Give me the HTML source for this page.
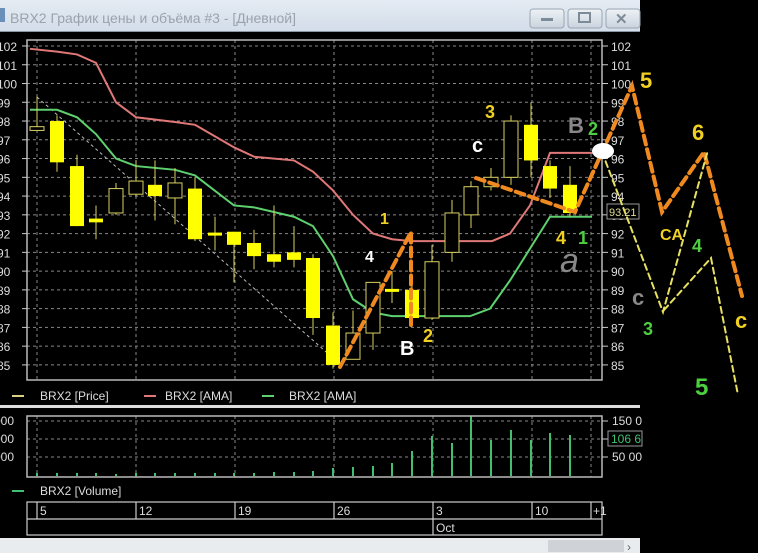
<!DOCTYPE html>
<html><head><meta charset="utf-8"><style>
html,body{margin:0;padding:0;background:#000;width:758px;height:553px;overflow:hidden}
svg{display:block}
text{font-family:"Liberation Sans",sans-serif}
</style></head><body>
<svg id="s" width="758" height="553" viewBox="0 0 758 553" xmlns="http://www.w3.org/2000/svg">
<defs><linearGradient id="tb" x1="0" y1="0" x2="0" y2="1"><stop offset="0" stop-color="#e4ebf3"/><stop offset="1" stop-color="#d3dde8"/></linearGradient>
<linearGradient id="bt" x1="0" y1="0" x2="0" y2="1"><stop offset="0" stop-color="#eef2f6"/><stop offset="1" stop-color="#c9d3de"/></linearGradient></defs>
<rect width="758" height="553" fill="#000"/>
<!-- title bar -->
<rect x="0" y="0" width="640" height="32" fill="url(#tb)"/>
<rect x="0" y="31" width="640" height="1" fill="#8a96a3"/>
<rect x="0" y="8" width="5" height="14" fill="#6a8fb8"/>
<text x="10" y="23" font-size="14" fill="#9aa3ad" font-family="Liberation Sans, DejaVu Sans, sans-serif">BRX2 График цены и объёма #3 - [Дневной]</text>
<rect x="530" y="9" width="34" height="19" rx="3" fill="url(#bt)" stroke="#9aa6b3"/>
<rect x="541" y="18" width="12" height="3" fill="#7d8a97"/>
<rect x="568" y="9" width="34" height="19" rx="3" fill="url(#bt)" stroke="#9aa6b3"/>
<rect x="579" y="13" width="11" height="9" fill="none" stroke="#7d8a97" stroke-width="2"/>
<rect x="606" y="9" width="34" height="19" rx="3" fill="url(#bt)" stroke="#9aa6b3"/>
<text x="615" y="24" font-size="15" font-weight="bold" fill="#7d8a97">✕</text>

<g id="grid"></g>
<rect x="27" y="40" width="575" height="340" fill="none" stroke="#bbb" stroke-width="1.5"/>
<g id="lab" font-size="12" fill="#ddd"></g>
<line x1="37" y1="97" x2="333" y2="358" stroke="#bbb" stroke-width="1" stroke-dasharray="3,3"/>
<polyline id="red" fill="none" stroke="#e07878" stroke-width="2"/>
<polyline id="grn" fill="none" stroke="#5fd06f" stroke-width="2"/>
<g id="cd"></g>
<rect x="607" y="204" width="32" height="15" fill="#000" stroke="#999"/>
<text x="609" y="216" font-size="11" fill="#dd9">93.21</text>

<!-- annotations -->
<g fill="none" stroke-linecap="round">
<polyline points="340,367 411,232 411,325" stroke="#f08a20" stroke-width="4" stroke-dasharray="9,5"/>
<polyline points="476,178 575,212 632,86 662,212 704,152 742,296" stroke="#f08a20" stroke-width="4" stroke-dasharray="9,5"/>
<polyline points="602,152 663,312 708,150" stroke="#e8e060" stroke-width="2" stroke-dasharray="6,4"/>
<polyline points="664,310 711,258 738,395" stroke="#e8e060" stroke-width="2" stroke-dasharray="6,4"/>
</g>
<ellipse cx="603" cy="151" rx="11" ry="8" fill="#fff"/>
<g font-family="Liberation Sans, sans-serif" font-weight="bold">
<text x="640" y="88" font-size="22" fill="#f0d020">5</text>
<text x="692" y="140" font-size="22" fill="#f0d020">6</text>
<text x="660" y="240" font-size="16" fill="#f0d020">CA</text>
<text x="692" y="252" font-size="18" fill="#4cd040">4</text>
<text x="643" y="335" font-size="18" fill="#4cd040">3</text>
<text x="632" y="305" font-size="22" fill="#888">c</text>
<text x="735" y="328" font-size="22" fill="#f0d020">c</text>
<text x="695" y="395" font-size="24" fill="#4cd040">5</text>
<text x="560" y="272" font-size="34" font-style="italic" fill="#888" font-weight="normal">a</text>
<text x="556" y="244" font-size="18" fill="#f0d020">4</text>
<text x="578" y="244" font-size="18" fill="#4cd040">1</text>
<text x="400" y="355" font-size="20" fill="#fff">B</text>
<text x="423" y="342" font-size="18" fill="#f0d020">2</text>
<text x="380" y="224" font-size="16" fill="#f0d020">1</text>
<text x="365" y="262" font-size="16" fill="#fff">4</text>
<text x="485" y="118" font-size="18" fill="#f0d020">3</text>
<text x="472" y="152" font-size="20" fill="#fff">c</text>
<text x="568" y="133" font-size="22" fill="#888">B</text>
<text x="588" y="135" font-size="18" fill="#4cd040">2</text>
</g>

<!-- legend -->
<line x1="12" y1="396" x2="24" y2="396" stroke="#d8d080" stroke-width="2"/>
<text x="40" y="400" font-size="12" fill="#ddd">BRX2 [Price]</text>
<line x1="144" y1="396" x2="156" y2="396" stroke="#e07878" stroke-width="2"/>
<text x="165" y="400" font-size="12" fill="#ddd">BRX2 [AMA]</text>
<line x1="262" y1="396" x2="274" y2="396" stroke="#5fd06f" stroke-width="2"/>
<text x="289" y="400" font-size="12" fill="#ddd">BRX2 [AMA]</text>
<rect x="0" y="405" width="640" height="3" fill="#ddd"/>

<!-- volume -->
<g id="vg"></g>
<rect x="27" y="416" width="575" height="61" fill="none" stroke="#bbb" stroke-width="1.5"/>
<g font-size="12" fill="#ddd">
<text x="-6" y="425">000</text><text x="-6" y="443">000</text><text x="-6" y="461">000</text>
<text x="612" y="425">150 0</text><text x="612" y="461">50 00</text>
</g>
<rect x="608" y="431" width="34" height="15" fill="#000" stroke="#999"/>
<text x="611" y="443" font-size="12" fill="#40c070">106 6</text>
<line x1="12" y1="491" x2="24" y2="491" stroke="#40c070" stroke-width="2"/>
<text x="40" y="495" font-size="12" fill="#ddd">BRX2 [Volume]</text>

<!-- date axis -->
<g stroke="#ccc" stroke-width="1.2" fill="none">
<rect x="27" y="502" width="575" height="33"/>
<line x1="27" y1="519" x2="602" y2="519"/>
<line x1="37" y1="502" x2="37" y2="519"/><line x1="136" y1="502" x2="136" y2="519"/>
<line x1="235" y1="502" x2="235" y2="519"/><line x1="334" y1="502" x2="334" y2="519"/>
<line x1="433" y1="502" x2="433" y2="535"/><line x1="532" y1="502" x2="532" y2="519"/>
<line x1="591" y1="502" x2="591" y2="519"/>
</g>
<g font-size="12" fill="#ddd">
<text x="40" y="515">5</text><text x="139" y="515">12</text><text x="238" y="515">19</text>
<text x="337" y="515">26</text><text x="436" y="515">3</text><text x="535" y="515">10</text>
<text x="593" y="515">+1</text><text x="436" y="532">Oct</text>
</g>
<rect x="0" y="538" width="640" height="15" fill="#e9ecef"/>
<rect x="548" y="540" width="76" height="12" fill="#cfd3d7"/>
<text x="627" y="551" font-size="12" fill="#666">›</text>
</svg>
<script>
var NS="http://www.w3.org/2000/svg";
function el(p,t,a){var e=document.createElementNS(NS,t);for(var k in a)e.setAttribute(k,a[k]);document.getElementById(p).appendChild(e);return e;}
function Y(p){return 46+(102-p)*18.76;}
var xs=[37,136,235,334,433,532];
for(var p=85;p<=102;p++){
 el('grid','line',{x1:27,x2:602,y1:Y(p),y2:Y(p),stroke:'#888','stroke-dasharray':'3,3'});
 var t=el('lab','text',{x:-3,y:Y(p)+5});t.textContent=p;
 var t2=el('lab','text',{x:611,y:Y(p)+5});t2.textContent=p;
 el('lab','line',{x1:602,x2:608,y1:Y(p),y2:Y(p),stroke:'#ccc'});
 el('lab','line',{x1:22,x2:27,y1:Y(p),y2:Y(p),stroke:'#ccc'});
}
xs.concat([591]).forEach(function(x){
 el('grid','line',{x1:x,x2:x,y1:40,y2:380,stroke:'#888','stroke-dasharray':'3,3'});
 el('vg','line',{x1:x,x2:x,y1:416,y2:477,stroke:'#888','stroke-dasharray':'3,3'});
});
[421,439,457].forEach(function(y){el('vg','line',{x1:27,x2:602,y1:y,y2:y,stroke:'#888','stroke-dasharray':'3,3'});
 el('vg','line',{x1:602,x2:608,y1:y,y2:y,stroke:'#ccc'});});
var C=[[37,97.5,97.7,99.3,97.5,0],[57,98,95.8,98.3,95.3,1],[77,95.6,92.4,96.2,92.4,1],[96,92.8,92.6,93.5,91.7,1],
[116,93.1,94.4,94.7,93,0],[136,94.1,94.8,95.9,94,0],[155,94.6,94,95.9,92.7,1],[175,93.9,94.7,95.5,92.5,0],
[195,94.4,91.7,95,91.6,1],[215,92,92,92.9,91.1,1],[234,92.1,91.4,92.1,89.4,1],[254,91.5,90.8,92.2,90.1,1],
[274,90.9,90.5,93.5,90.2,1],[294,91,90.6,92.4,90.2,1],[313,90.7,87.5,90.9,86.6,1],[333,87.1,85,87.8,84.8,1],
[353,85.3,86.7,87.9,85.3,0],[373,86.7,89.4,89.4,85.8,0],[392,89,89,90,88.3,1],[412,89,87.5,89.2,87.3,1],
[432,87.5,90.5,91.4,87.4,0],[452,91,93.1,93.8,90.5,0],[471,93,94.5,94.8,92.3,0],[491,94.5,95,95.5,94.3,0],
[511,95,98,98.3,94.6,0],[531,97.8,95.9,99,95,1],[550,95.6,94.4,95.9,93.9,1],[570,94.6,93.1,95.6,92.9,1]];
C.forEach(function(c){var x=c[0],o=Y(c[1]),cl=Y(c[2]),t=Math.min(o,cl),b=Math.max(o,cl);
 el('cd','line',{x1:x,x2:x,y1:Y(c[3]),y2:Y(c[4]),stroke:'#d8d060','stroke-width':1});
 if(b-t<2){el('cd','rect',{x:x-7,y:t-1,width:14,height:3,fill:'#ff0'});}
 else if(c[5])el('cd','rect',{x:x-7,y:t,width:14,height:b-t,fill:'#ff0'});
 else el('cd','rect',{x:x-7,y:t,width:14,height:b-t,fill:'#000',stroke:'#d8d060'});});
function pl(id,a){document.getElementById(id).setAttribute('points',a.map(function(q){return q[0]+','+Y(q[1]);}).join(' '));}
pl('red',[[30,101.85],[57,101.7],[77,101.55],[96,101.1],[116,99],[136,98.2],[175,97.95],[195,97.8],[234,96.6],[254,96.1],[294,95.9],[313,95.3],[333,94.3],[353,93],[373,92],[392,91.7],[412,91.6],[492,91.6],[510,92],[530,93.5],[550,96.3],[596,96.3]]);
pl('grn',[[30,98.6],[57,98.6],[77,98.2],[96,97.3],[116,96],[136,95.6],[175,95.4],[195,95.1],[234,93.5],[254,93.4],[294,92.9],[313,92.4],[333,90.8],[353,88.5],[373,87.8],[392,87.6],[470,87.6],[490,88],[510,89.5],[550,92.9],[592,92.9]]);
var V=[[37,3],[57,3],[77,3],[96,3],[116,2],[136,3],[155,3],[175,3],[195,3],[215,3],[234,3],[254,3],[274,4],[294,4],[313,5],[333,8],[353,9],[373,10],[392,13],[412,25],[432,40],[452,33],[471,60],[491,36],[511,46],[531,36],[550,43],[570,41]];
V.forEach(function(v){el('vg','line',{x1:v[0],x2:v[0],y1:476,y2:476-v[1],stroke:'#40c070','stroke-width':2});});
</script>
</body></html>
